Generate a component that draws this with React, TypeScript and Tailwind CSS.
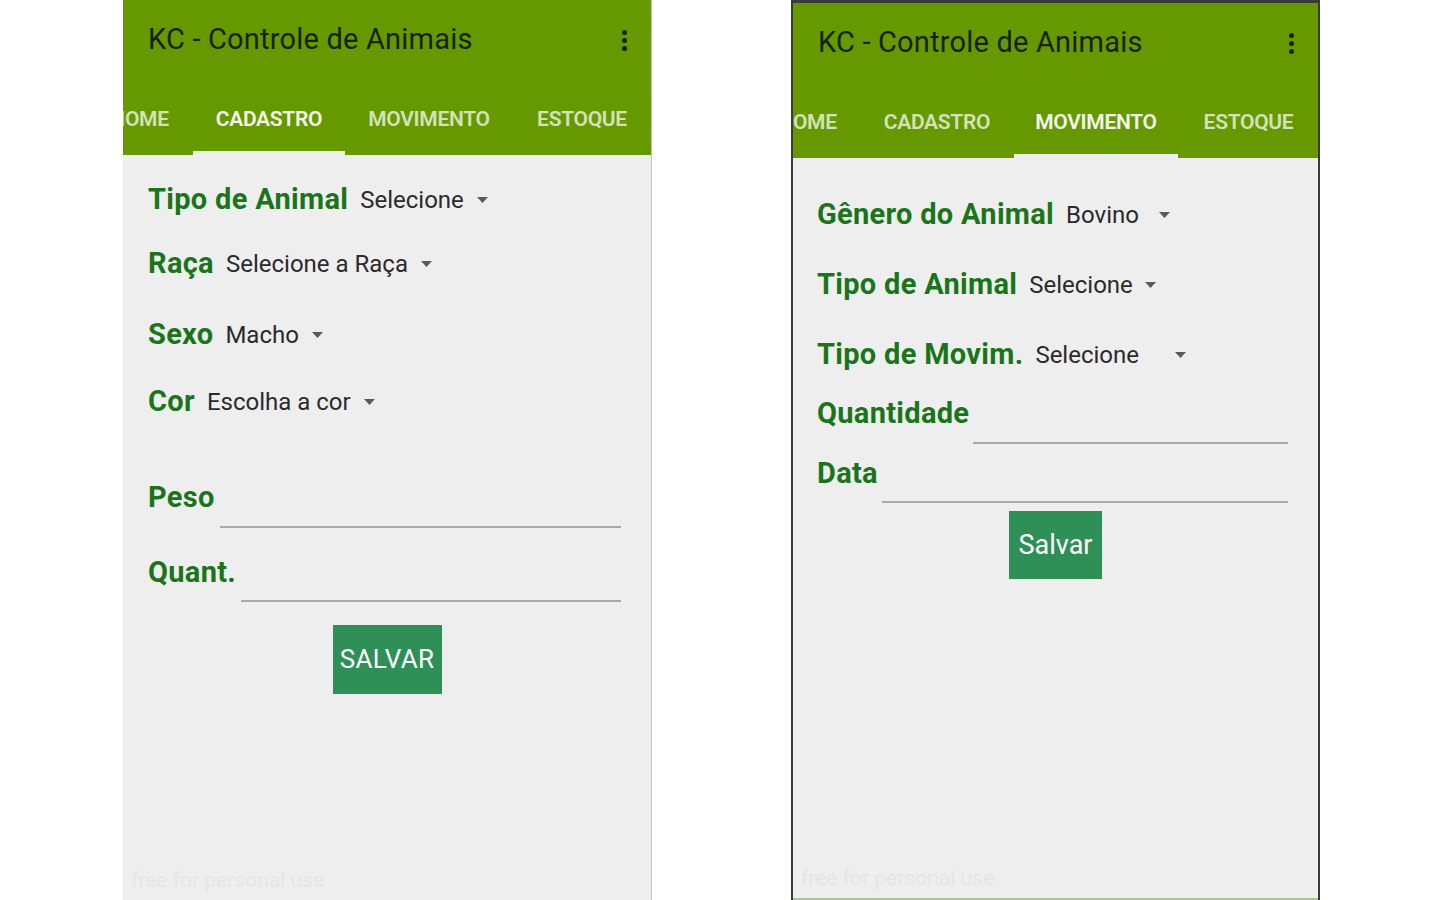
import React from "react";

type Tab = { label: string; width: string; active?: boolean };

const leftTabs: Tab[] = [
  { label: "HOME", width: "w-[107px]" },
  { label: "CADASTRO", width: "w-[152px]", active: true },
  { label: "MOVIMENTO", width: "w-[168px]" },
  { label: "ESTOQUE", width: "w-[138px]" },
];

const rightTabs: Tab[] = [
  { label: "HOME", width: "w-[105px]" },
  { label: "CADASTRO", width: "w-[154px]" },
  { label: "MOVIMENTO", width: "w-[164px]", active: true },
  { label: "ESTOQUE", width: "w-[141px]" },
];

const Arrow = ({ className }: { className: string }) => (
  <svg className={className} width="11" height="6" viewBox="0 0 11 6">
    <path d="M0 0h11L5.5 6z" fill="#5a5a5a" />
  </svg>
);

// the first tab is scrolled partly out of view, as in the app
const AppBar = ({ tabs, offset }: { tabs: Tab[]; offset: string }) => (
  <div className="bg-[#669900] h-[155px] flex flex-col overflow-hidden">
    <div className="h-[80px] flex items-center justify-between pl-[25px] pr-[24px]">
      <span className="text-[29px] text-[#17220c] tracking-[0.2px]">
        KC - Controle de Animais
      </span>
      <div className="flex flex-col gap-[3px]">
        <span className="w-[5px] h-[5px] rounded-full bg-[#17220c]" />
        <span className="w-[5px] h-[5px] rounded-full bg-[#17220c]" />
        <span className="w-[5px] h-[5px] rounded-full bg-[#17220c]" />
      </div>
    </div>
    <div className={`h-[75px] flex ${offset}`}>
      {tabs.map((t) => (
        <div
          key={t.label}
          className={`${t.width} shrink-0 relative flex items-center justify-center pt-[5px]`}
        >
          <span
            className={`text-[21px] font-semibold tracking-[-0.3px] ${
              t.active ? "text-[#f4f7ee]" : "text-[#d3e2bb]"
            }`}
          >
            {t.label}
          </span>
          {t.active && (
            <span className="absolute left-0 right-0 bottom-0 h-[4px] bg-[#eef0ea]" />
          )}
        </div>
      ))}
    </div>
  </div>
);

const Select = ({
  label,
  value,
  mt,
  arrowGap,
}: {
  label: string;
  value: string;
  mt: string;
  arrowGap: string;
}) => (
  <div className={`${mt} h-[40px] flex items-center`}>
    <span className="text-[29px] font-bold text-[#1a751a] tracking-[0.3px]">
      {label}
    </span>
    <span className="ml-[12px] text-[24px] text-[#2b2b2b]">{value}</span>
    <Arrow className={arrowGap} />
  </div>
);

const Field = ({
  label,
  labelW,
  mt,
  h,
}: {
  label: string;
  labelW: string;
  mt: string;
  h: string;
}) => (
  <div className={`${mt} ${h} flex pr-[30px]`}>
    <div className={`${labelW} h-[40px] flex items-center shrink-0`}>
      <span className="text-[29px] font-bold text-[#1a751a] tracking-[0.3px]">
        {label}
      </span>
    </div>
    <div className="flex-1 border-b-2 border-[#a9a9a9]" />
  </div>
);

const Watermark = () => (
  <div className="mt-auto pb-[4px] pl-[8px] text-[21px] text-[#e5e5e5]">
    free for personal use
  </div>
);

export default function App() {
  return (
    <div className="w-[1440px] h-[900px] bg-white flex pl-[123px] gap-[139px] overflow-hidden font-['Roboto',sans-serif]">
      {/* Cadastro screen */}
      <div className="w-[529px] h-[900px] bg-[#eeeeee] border-r border-[#c4c4c4] flex flex-col">
        <AppBar tabs={leftTabs} offset="ml-[-37px]" />
        <div className="pl-[25px] flex flex-col">
          <Select label="Tipo de Animal" value="Selecione" mt="mt-[25px]" arrowGap="ml-[13px]" />
          <Select label="Raça" value="Selecione a Raça" mt="mt-[24px]" arrowGap="ml-[13px]" />
          <Select label="Sexo" value="Macho" mt="mt-[31px]" arrowGap="ml-[13px]" />
          <Select label="Cor" value="Escolha a cor" mt="mt-[27px]" arrowGap="ml-[13px]" />
          <Field label="Peso" labelW="w-[72px]" mt="mt-[56px]" h="h-[50px]" />
          <Field label="Quant." labelW="w-[93px]" mt="mt-[25px]" h="h-[49px]" />
        </div>
        <div className="flex justify-center mt-[23px]">
          <button className="w-[109px] h-[69px] bg-[#2e8f57] text-white text-[26px] tracking-[0.3px]">
            SALVAR
          </button>
        </div>
        <Watermark />
      </div>

      {/* Movimento screen */}
      <div className="w-[529px] h-[900px] bg-[#eeeeee] border-t-[3px] border-x-2 border-[#3a3a3a] flex flex-col">
        <AppBar tabs={rightTabs} offset="ml-[-38px]" />
        <div className="pl-[24px] flex flex-col">
          <Select label="Gênero do Animal" value="Bovino" mt="mt-[37px]" arrowGap="ml-[20px]" />
          <Select label="Tipo de Animal" value="Selecione" mt="mt-[30px]" arrowGap="ml-[12px]" />
          <Select label="Tipo de Movim." value="Selecione" mt="mt-[30px]" arrowGap="ml-[36px]" />
          <Field label="Quantidade" labelW="w-[156px]" mt="mt-[19px]" h="h-[50px]" />
          <Field label="Data" labelW="w-[65px]" mt="mt-[10px]" h="h-[49px]" />
        </div>
        <div className="flex justify-center mt-[8px]">
          <button className="w-[93px] h-[68px] bg-[#2e8f57] text-white text-[27px]">
            Salvar
          </button>
        </div>
        <Watermark />
        <div className="h-[2px] bg-[#a9c98a]" />
      </div>
    </div>
  );
}
